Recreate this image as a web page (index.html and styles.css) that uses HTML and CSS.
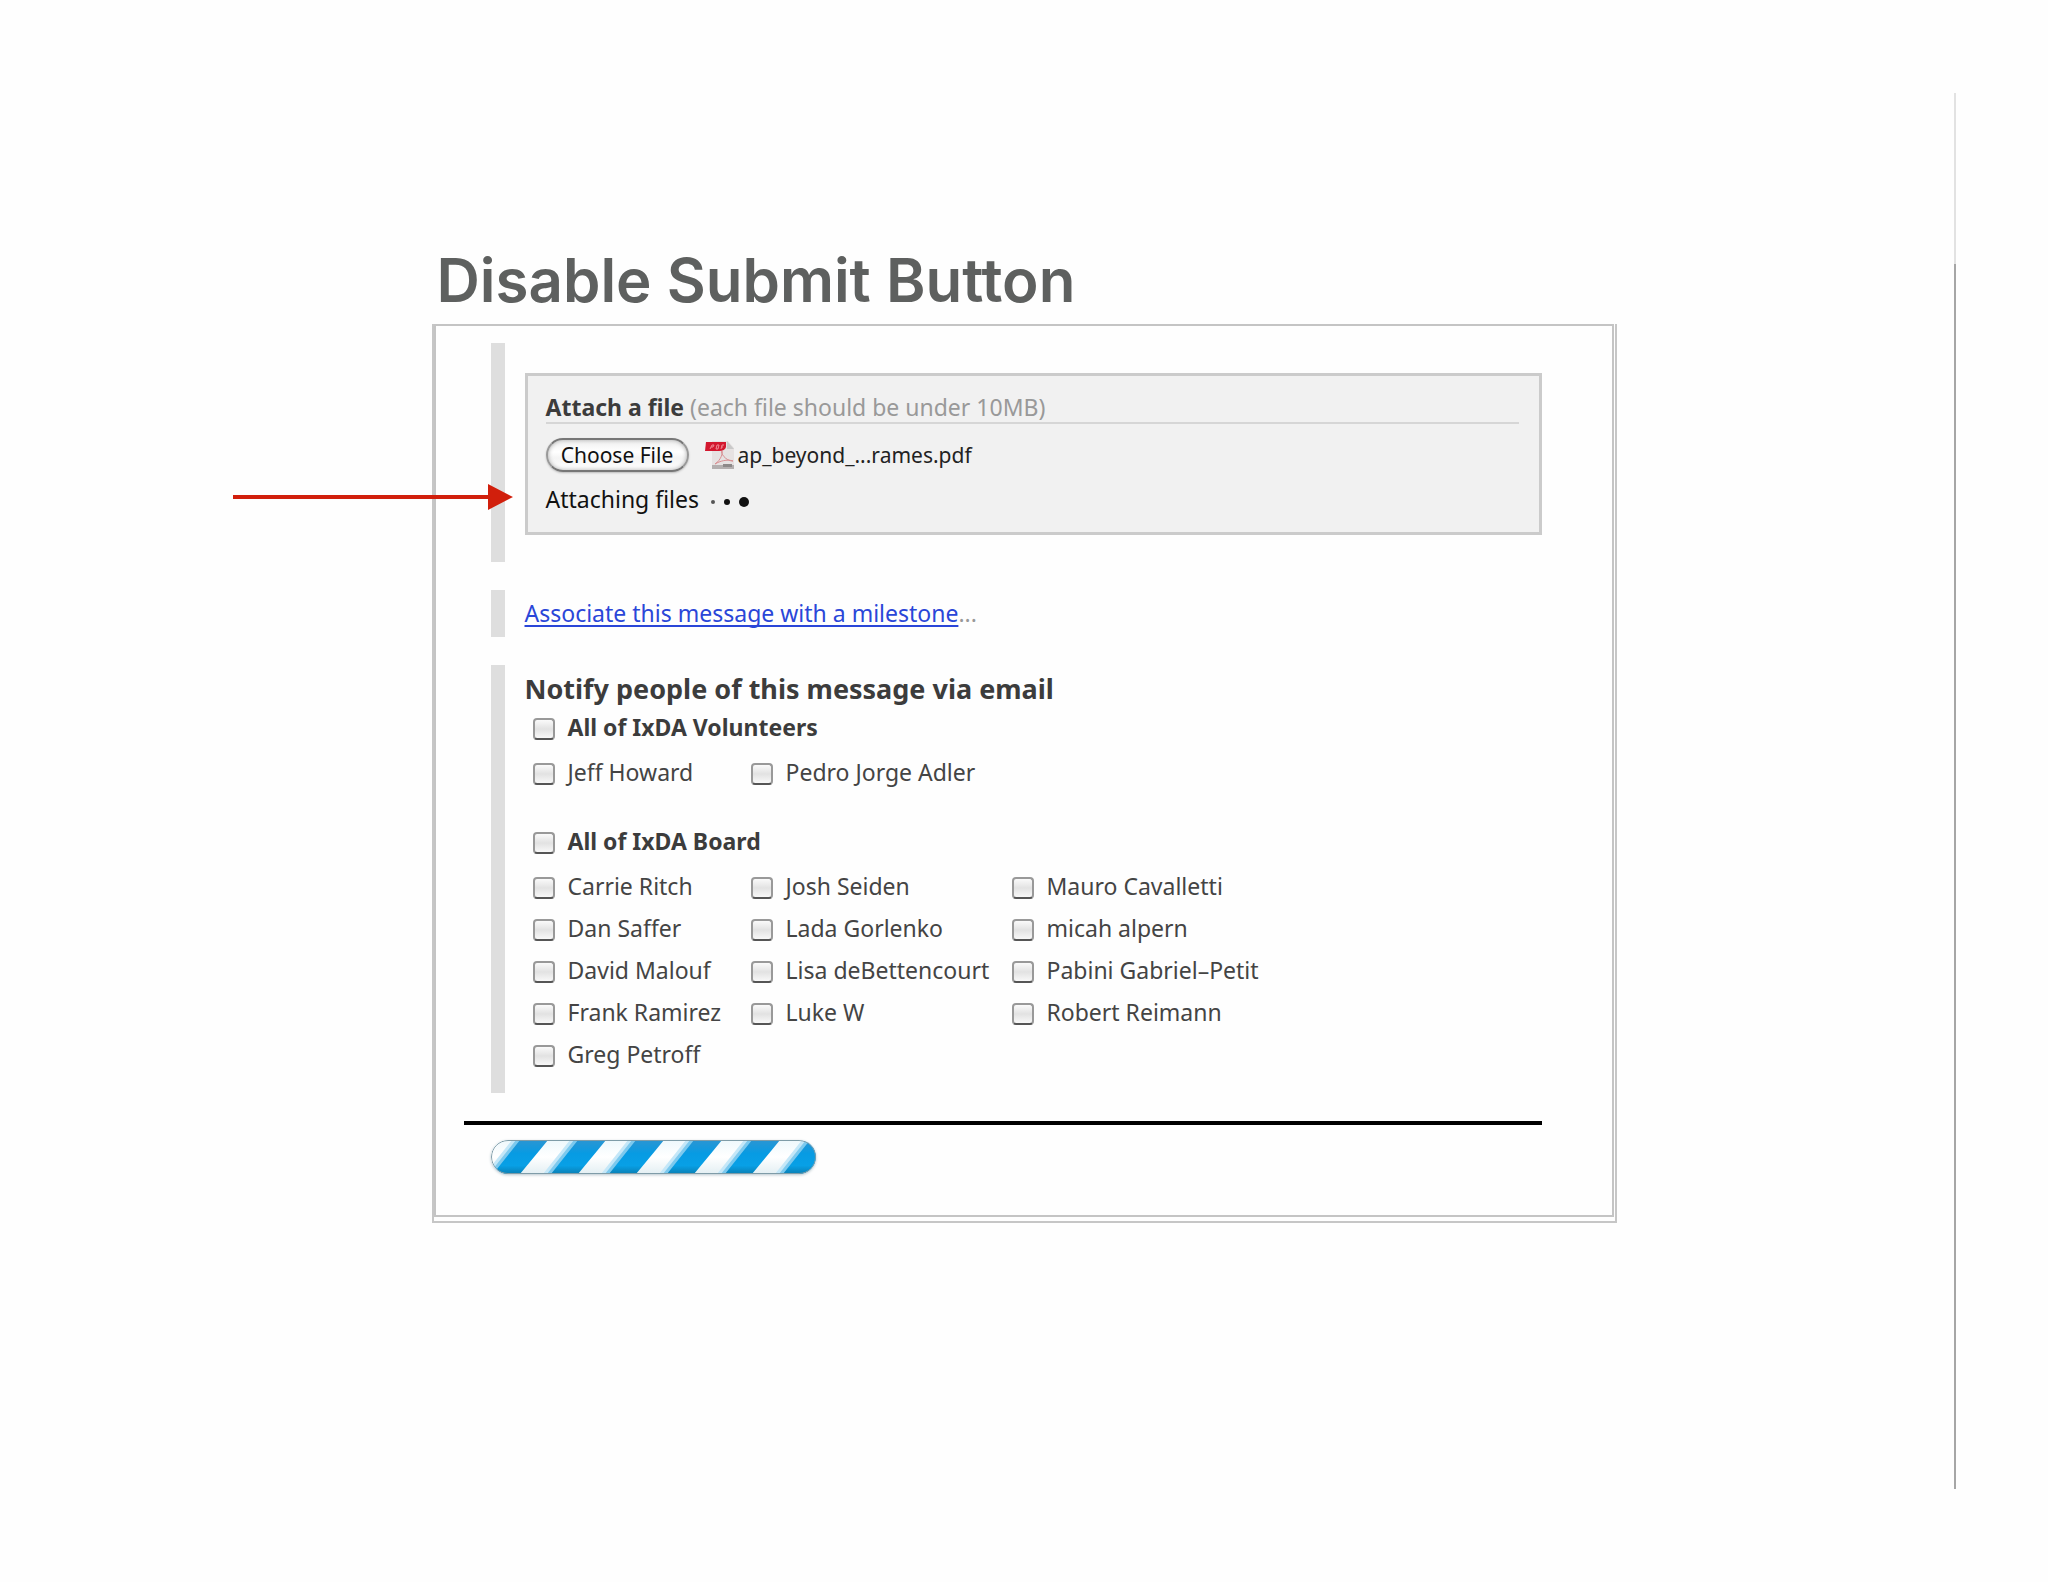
FILE: index.html
```
<!DOCTYPE html>
<html lang="en">
	<head>
		<meta charset="utf-8">
		<title>Disable Submit Button</title>
		<link rel="stylesheet" href="styles.css">
	</head>
	<body>
		<div class="slide">
			<main class="content">
				<h1 class="title">Disable Submit Button</h1>
				<div class="frame">
					<form class="panel">
						<section class="block attach-block">
							<div class="attach">
								<p class="attach-title"><strong>Attach a file</strong> (each file should be under 10MB)</p>
								<div class="file-row">
									<button type="button" class="choose">Choose File</button>
									<svg class="pdf" viewBox="0 0 30 30" aria-hidden="true">
										<path d="M7 1H23L29 8V29H7Z" fill="#e6e2e2"/>
										<path d="M22 1V9H29Z" fill="#c9c9c9"/>
										<path d="M7 25H29V29H7Z" fill="#b3afaf"/>
										<path d="M18 24H27V27H18Z" fill="#8d8989"/>
										<path d="M10 24C16 20 18 13 17 11C15 12 20 21 28 21C22 19 15 21 10 24Z" fill="none" stroke="#d98f92"/>
										<path d="M1 2H21V7Q20 11 14 11H0Z" fill="#d3182f"/>
										<path d="M5 9L7 5H9L8 7H6M11 9L12 5H14L13 9H11M16 9L17 5H19M17 7H18" fill="none" stroke="#ee8a94"/>
									</svg>
									<span>ap_beyond_...rames.pdf</span>
								</div>
								<div class="status">
									<span>Attaching files</span>
									<span class="dot dot-s"></span>
									<span class="dot dot-m"></span>
									<span class="dot dot-l"></span>
									<svg class="arrow" viewBox="0 0 280 26" aria-hidden="true">
										<path d="M0 11H255V0L280 13L255 26V15H0Z" fill="#d11f0c"/>
									</svg>
								</div>
							</div>
						</section>
						<section class="block milestone">
							<a href="#">Associate this message with a milestone</a>...
						</section>
						<section class="block notify">
							<h2>Notify people of this message via email</h2>
							<label class="check all"><input type="checkbox">All of IxDA Volunteers</label>
							<div class="people">
								<label class="check"><input type="checkbox">Jeff Howard</label>
								<label class="check"><input type="checkbox">Pedro Jorge Adler</label>
							</div>
							<label class="check all board"><input type="checkbox">All of IxDA Board</label>
							<div class="people">
								<label class="check"><input type="checkbox">Carrie Ritch</label>
								<label class="check"><input type="checkbox">Josh Seiden</label>
								<label class="check"><input type="checkbox">Mauro Cavalletti</label>
								<label class="check"><input type="checkbox">Dan Saffer</label>
								<label class="check"><input type="checkbox">Lada Gorlenko</label>
								<label class="check"><input type="checkbox">micah alpern</label>
								<label class="check"><input type="checkbox">David Malouf</label>
								<label class="check"><input type="checkbox">Lisa deBettencourt</label>
								<label class="check"><input type="checkbox">Pabini Gabriel–Petit</label>
								<label class="check"><input type="checkbox">Frank Ramirez</label>
								<label class="check"><input type="checkbox">Luke W</label>
								<label class="check"><input type="checkbox">Robert Reimann</label>
								<label class="check"><input type="checkbox">Greg Petroff</label>
							</div>
						</section>
						<hr class="line">
						<div class="progress" role="progressbar" aria-label="Sending">
							<svg width="325" height="34" aria-hidden="true">
								<defs>
									<linearGradient id="blue" x1="0" y1="0" x2="0" y2="1">
										<stop offset="0" stop-color="#2b95d2"/>
										<stop offset="0.4" stop-color="#079be3"/>
										<stop offset="0.75" stop-color="#08a0e6"/>
										<stop offset="1" stop-color="#0a7fb4"/>
									</linearGradient>
									<linearGradient id="gloss" x1="0" y1="0" x2="0" y2="1">
										<stop offset="0" stop-color="#eef8fc"/>
										<stop offset="0.5" stop-color="#fff"/>
										<stop offset="1" stop-color="#e3eff3"/>
									</linearGradient>
									<pattern id="stripes" x="-10" width="58" height="34" patternUnits="userSpaceOnUse">
										<path d="M31 0H40L13 34H4Z" fill="#c4e7f8"/>
										<path d="M35 0H42L15 34H8Z" fill="#7cc9ee"/>
										<path d="M39 0H67L39 34H12ZM-19 0H9L-19 34H-46Z" fill="url(#blue)"/>
									</pattern>
								</defs>
								<rect width="325" height="34" fill="url(#gloss)"/>
								<rect width="325" height="34" fill="url(#stripes)"/>
							</svg>
						</div>
					</form>
				</div>
			</main>
			<div class="side"></div>
		</div>
	</body>
</html>
```
FILE: styles.css
```
*{
    box-sizing: border-box;
    margin: 0;
    padding: 0;
}
body{
    background: #fefefe;
    color: #444;
    font-family: "Noto Sans", "Open Sans", sans-serif;
    font-size: 23px;
    line-height: 30px;
}
.slide{
    display: grid;
    grid-template-columns: 1fr minmax(0, 1185px) 1fr;
    min-height: 100vh;
    padding: 93px 0;
}
.content{
    grid-column: 2;
    padding-top: 147px;
}
.title{
    padding: 0 0 4px 5px;
    color: #5e605f;
    font-family: Inter, "Open Sans", sans-serif;
    font-size: 60px;
    font-weight: 600;
    line-height: 80px;
    white-space: nowrap;
}
.side{
    width: 2px;
    margin: 0 92px 0 auto;
    background: linear-gradient(#e2e2e2 171px, #a6a6a6 171px);
}

/* panel */
.frame{
    border: 2px solid #c6c6c6;
    border-top: 0;
    padding: 0 1px 4px 0;
}
.panel{
    border: 2px solid #c4c4c4;
    padding: 17px 70px 41px 28px;
    background: #fefefe;
}
.block{
    margin: 0 0 28px 27px;
    border-left: 14px solid #dedede;
    padding-left: 20px;
}
.attach-block{
    padding-top: 30px;
    padding-bottom: 27px;
}
.attach{
    border: 3px solid #cbcbcb;
    padding: 17px 20px 18px 18px;
    background: #f1f1f1;
}
.attach-title{
    border-bottom: 2px solid #d6d6d6;
    color: #999;
    line-height: 29px;
}
.attach-title strong{
    color: #3c3c3c;
}
.file-row{
    display: flex;
    align-items: center;
    margin: 14px 0 12px;
    color: #222;
    font-size: 21px;
}
.choose{
    height: 34px;
    width: 143px;
    margin-right: 16px;
    border: 2px solid #7d7d7d;
    border-color: #777 #999 #777;
    border-radius: 17px;
    background: linear-gradient(#efefef, #fff 40%, #f4f4f4 60%, #fff);
    box-shadow: inset 0 0 4px #aaa, 0 1px 2px #bbb;
    color: #111;
    font: inherit;
    line-height: 28px;
}
.pdf{
    width: 30px;
    height: 30px;
    margin-right: 3px;
}
.status{
    display: flex;
    align-items: center;
    position: relative;
    color: #111;
}
.dot{
    margin: 6px 0 0 9px;
    border-radius: 50%;
    background: #111;
}
.dot-s{
    width: 4px;
    height: 4px;
    margin-left: 12px;
    background: #555;
}
.dot-m{
    width: 6px;
    height: 6px;
}
.dot-l{
    width: 10px;
    height: 10px;
}
.arrow{
    position: absolute;
    right: 100%;
    top: 0;
    width: 280px;
    height: 26px;
    margin-right: 33px;
}
.milestone{
    padding-top: 8px;
    padding-bottom: 9px;
    color: #999;
}
.milestone a{
    color: #2a46d8;
    text-decoration-thickness: 2px;
    text-underline-offset: 3px;
    text-decoration-skip-ink: none;
}

/* people list */
.notify{
    padding-top: 6px;
    padding-bottom: 24px;
}
.notify h2{
    margin-bottom: 5px;
    font-size: 27px;
    line-height: 36px;
    color: #3c3c3c;
}
.people{
    display: grid;
    grid-template-columns: 218px 261px 1fr;
    row-gap: 12px;
    margin-top: 15px;
}
.check{
    display: flex;
    align-items: center;
    padding-left: 8px;
    white-space: nowrap;
}
.check input{
    appearance: none;
    flex: none;
    width: 22px;
    height: 22px;
    margin: 3px 13px 0 0;
    border: 2px solid #999;
    border-bottom-color: #555;
    border-radius: 4px;
    background: linear-gradient(#fafafa, #e2e2e2 50%, #f8f8f8);
}
.all{
    color: #3c3c3c;
    font-weight: bold;
}
.board{
    margin-top: 39px;
}
.line{
    border: 0;
    height: 4px;
    background: #000;
}
.progress{
    width: 325px;
    height: 34px;
    margin: 15px 0 0 27px;
    border-radius: 17px;
    overflow: hidden;
    position: relative;
    box-shadow: 0 1px 3px #b5c4cc;
}
.progress svg{
    display: block;
}
.progress::after{
    content: "";
    position: absolute;
    inset: 0;
    border: 1px solid #7f9ca8;
    border-radius: 17px;
}
```
